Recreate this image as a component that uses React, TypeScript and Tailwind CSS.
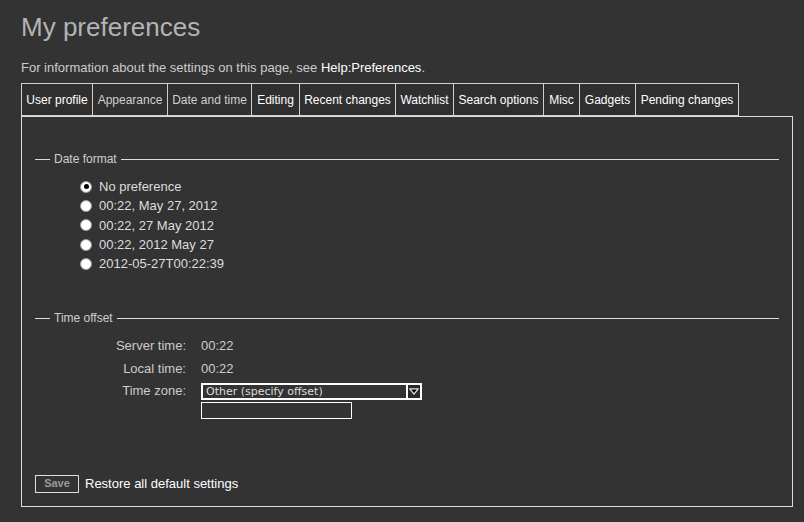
import React from "react";

const tabs = [
  { label: "User profile", w: "w-[71px]", tone: "text-white" },
  { label: "Appearance", w: "w-[75px]", tone: "text-[#cfcfcf]" },
  { label: "Date and time", w: "w-[84px]", tone: "text-[#cfcfcf]" },
  { label: "Editing", w: "w-[48px]", tone: "text-white" },
  { label: "Recent changes", w: "w-[96px]", tone: "text-white" },
  { label: "Watchlist", w: "w-[58px]", tone: "text-white" },
  { label: "Search options", w: "w-[90px]", tone: "text-white" },
  { label: "Misc", w: "w-[36px]", tone: "text-white" },
  { label: "Gadgets", w: "w-[56px]", tone: "text-white" },
  { label: "Pending changes", w: "w-[104px]", tone: "text-white" },
];

const dateFormats = [
  "No preference",
  "00:22, May 27, 2012",
  "00:22, 27 May 2012",
  "00:22, 2012 May 27",
  "2012-05-27T00:22:39",
];

// Trait + titre + trait, comme une légende de fieldset
function Legend({ children }: { children: React.ReactNode }) {
  return (
    <div className="flex h-4 items-center">
      <div className="h-px w-[15px] bg-[#dcdcdc]" />
      <span className="px-[4px] text-[12px] leading-4 text-[#cfcfcf]">{children}</span>
      <div className="h-px flex-1 bg-[#dcdcdc]" />
    </div>
  );
}

function Radio({ checked }: { checked?: boolean }) {
  return (
    <span className="flex h-3 w-3 items-center justify-center rounded-full border border-[#9a9a9a] bg-white">
      {checked && <span className="h-[5px] w-[5px] rounded-full bg-black" />}
    </span>
  );
}

export default function App() {
  return (
    <div
      className="h-[522px] w-[804px] overflow-hidden bg-[#333333] pl-[21px] pt-[11px]"
      style={{ fontFamily: '"Liberation Sans", Arial, sans-serif' }}
    >
      <h1 className="text-[26px] leading-8 text-[#b4b4b4]">My preferences</h1>

      <p className="mt-[17px] text-[13px] leading-4 text-[#cccccc]">
        For information about the settings on this page, see{" "}
        <a className="text-white">Help:Preferences</a>.
      </p>

      {/* Onglets */}
      <div className="mt-[7px] flex">
        {tabs.map((t, i) => (
          <div
            key={t.label}
            className={`flex h-[33px] items-center justify-center border-y border-l border-[#cfcfcf] bg-[#2f2f2f] text-[12px] ${t.w} ${t.tone} ${
              i === tabs.length - 1 ? "border-r" : ""
            }`}
          >
            {t.label}
          </div>
        ))}
      </div>

      {/* Panneau */}
      <div className="w-[772px] border border-[#dcdcdc] px-[13px] pb-[13px] pt-[34px]">
        <Legend>Date format</Legend>
        <div className="ml-[45px] mt-[10px]">
          {dateFormats.map((f, i) => (
            <div key={f} className="flex h-[19.3px] items-center gap-[7px]">
              <Radio checked={i === 0} />
              <span className="text-[13px] text-[#dddddd]">{f}</span>
            </div>
          ))}
        </div>

        <div className="mt-[37px]">
          <Legend>Time offset</Legend>
        </div>

        <div className="mt-[8px] grid grid-cols-[151px_auto] items-center gap-x-[15px] text-[13px] text-[#cccccc]">
          <span className="h-[23px] text-right leading-[23px]">Server time:</span>
          <span className="leading-[23px]">00:22</span>
          <span className="h-[23px] text-right leading-[23px]">Local time:</span>
          <span className="leading-[23px]">00:22</span>
          <span className="mt-[1px] text-right">Time zone:</span>
          <div className="mt-[1px] flex h-[17px] w-[221px] items-stretch border-2 border-white bg-[#333333]">
            <span
              className="flex-1 pl-[3px] text-[11px] leading-[13px] text-[#dddddd]"
              style={{ fontFamily: '"DejaVu Sans", "Liberation Sans", sans-serif' }}
            >
              Other (specify offset)
            </span>
            <span className="flex w-[14px] items-center justify-center border-l-2 border-white bg-[#2a2a2a]">
              <svg width="10" height="7" viewBox="0 0 10 7">
                <path d="M0.8 0.8 L9.2 0.8 L5 6.2 Z" fill="#000" stroke="#e8e8e8" strokeWidth="1.2" strokeLinejoin="round" />
              </svg>
            </span>
          </div>
          <span />
          <div className="mt-px h-[17px] w-[151px] border-[1.5px] border-white bg-[#333333]" />
        </div>

        <div className="mt-[55px] flex items-center gap-[6px]">
          <button className="flex h-[18px] w-[44px] items-center justify-center border-[1.5px] border-[#dddddd] text-[11px] font-bold text-[#9a9a9a]">
            Save
          </button>
          <span className="text-[13px] text-white">Restore all default settings</span>
        </div>
      </div>
    </div>
  );
}
